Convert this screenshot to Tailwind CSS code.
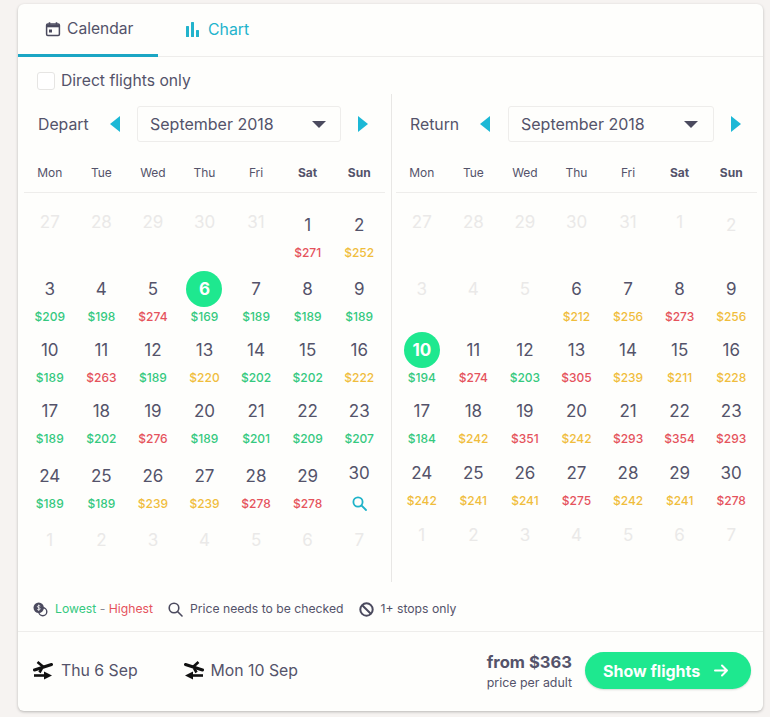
<!DOCTYPE html>
<html>
<head>
<meta charset="utf-8">
<script src="https://cdn.jsdelivr.net/npm/@tailwindcss/browser@4"></script>
</head>
<body class="bg-[#f6f3f1] font-['Inter','Liberation_Sans',sans-serif] text-[#54536a] antialiased">
<div class="w-[770px] h-[717px] overflow-hidden pt-[4px] pl-[18px]">
<div class="w-[745px] h-[707px] bg-[#fefefc] rounded-md shadow-[0_1px_3px_rgba(0,0,0,0.25)] flex flex-col">

  <div class="h-[53px] flex border-b border-[#eeedeb]">
    <div class="w-[140px] h-[53px] border-b-[3px] border-[#1ba6c4] flex items-center pl-[27px] gap-[6px] text-[15.6px]">
      <svg width="16" height="16" viewBox="0 0 16 16" fill="none"><rect x="1.6" y="3" width="12.8" height="11.4" rx="1.2" stroke="#4b4a5e" stroke-width="1.5"/><path d="M1.6 3.5h12.8v2.8H1.6z" fill="#4b4a5e"/><path d="M4.5 1.2v2.5M11.5 1.2v2.5" stroke="#4b4a5e" stroke-width="1.6"/><rect x="4" y="8.5" width="3" height="3" fill="#4b4a5e"/></svg>
      <span>Calendar</span>
    </div>
    <div class="flex items-center pl-[28px] gap-[9px] text-[15.8px] text-[#22b3cc] pb-[1px]">
      <svg width="13" height="15" viewBox="0 0 13 15" fill="#22b3cc"><rect x="0" y="4" width="3" height="11" rx="0.5"/><rect x="5" y="0" width="3" height="15" rx="0.5"/><rect x="10" y="8" width="3" height="7" rx="0.5"/></svg>
      <span>Chart</span>
    </div>
  </div>

  <div class="h-[37px] flex items-center pl-[19px] gap-[6px] text-[15.7px] pt-[10px]">
    <div class="w-[18px] h-[18px] rounded-[3px] border border-[#e6e5e3] bg-white"></div>
    <span>Direct flights only</span>
  </div>

  <div class="h-[488px] flex">
    <div class="w-[374px] border-r border-[#e8e7e5] pt-[12px] pl-[6px]">
      <div class="h-[36px] flex items-center">
        <span class="text-[15.8px] w-[86px] pl-[14px] pt-[1px]">Depart</span>
        <svg width="10" height="16" viewBox="0 0 10 16"><path d="M10 0v16L0 8z" fill="#1cb8d6"/></svg>
        <div class="ml-[17px] w-[204px] h-[36px] border border-[#eeedeb] rounded-[3px] flex items-center justify-between pl-[12px] pr-[14px] text-base">
          <span>September 2018</span>
          <svg width="14" height="7" viewBox="0 0 14 7"><path d="M0 0h14L7 7z" fill="#4b4a5e"/></svg>
        </div>
        <svg class="ml-[17px]" width="10" height="16" viewBox="0 0 10 16"><path d="M0 0v16l10-8z" fill="#1cb8d6"/></svg>
      </div>
      <div class="mt-[19px] w-[361px] h-[32px] pb-[8px] grid grid-cols-7 items-center text-center text-xs border-b border-[#eeedeb]">
        <div>Mon</div><div>Tue</div><div>Wed</div><div>Thu</div><div>Fri</div><div class="font-bold">Sat</div><div class="font-bold">Sun</div>
      </div>
      <div class="mt-[20px] w-[361px] grid grid-cols-7 grid-rows-[64px_61px_61px_65px_64px_24px] text-center text-[17px] leading-[24px] [&_span]:block [&_span]:mt-[8px] [&_span]:text-xs [&_span]:leading-4 [&_span]:font-medium">
        <div class="text-[#eae9e8] -mt-[3px]">27</div><div class="text-[#eae9e8] -mt-[3px]">28</div><div class="text-[#eae9e8] -mt-[3px]">29</div><div class="text-[#eae9e8] -mt-[3px]">30</div><div class="text-[#eae9e8] -mt-[3px]">31</div>
        <div>1<span class="text-[#e5535c]">$271</span></div><div>2<span class="text-[#f0bd3c]">$252</span></div>

        <div>3<span class="text-[#35c97f]">$209</span></div><div>4<span class="text-[#35c97f]">$198</span></div><div>5<span class="text-[#e5535c]">$274</span></div>
        <div><div class="mx-auto -my-[6px] w-9 h-9 rounded-full bg-[#1ee88f] text-white font-bold flex items-center justify-center">6</div><span class="text-[#35c97f]">$169</span></div>
        <div>7<span class="text-[#35c97f]">$189</span></div><div>8<span class="text-[#35c97f]">$189</span></div><div>9<span class="text-[#35c97f]">$189</span></div>

        <div>10<span class="text-[#35c97f]">$189</span></div><div>11<span class="text-[#e5535c]">$263</span></div><div>12<span class="text-[#35c97f]">$189</span></div><div>13<span class="text-[#f0bd3c]">$220</span></div><div>14<span class="text-[#35c97f]">$202</span></div><div>15<span class="text-[#35c97f]">$202</span></div><div>16<span class="text-[#f0bd3c]">$222</span></div>

        <div>17<span class="text-[#35c97f]">$189</span></div><div>18<span class="text-[#35c97f]">$202</span></div><div>19<span class="text-[#e5535c]">$276</span></div><div>20<span class="text-[#35c97f]">$189</span></div><div>21<span class="text-[#35c97f]">$201</span></div><div>22<span class="text-[#35c97f]">$209</span></div><div>23<span class="text-[#35c97f]">$207</span></div>

        <div>24<span class="text-[#35c97f]">$189</span></div><div>25<span class="text-[#35c97f]">$189</span></div><div>26<span class="text-[#f0bd3c]">$239</span></div><div>27<span class="text-[#f0bd3c]">$239</span></div><div>28<span class="text-[#e5535c]">$278</span></div><div>29<span class="text-[#e5535c]">$278</span></div>
        <div class="-mt-[3px]">30<svg class="mx-auto mt-[11px]" width="15" height="15" viewBox="0 0 15 15" fill="none" stroke="#1fb3c9" stroke-width="1.8"><circle cx="6" cy="6" r="4.6"/><path d="M9.5 9.5L14 14" stroke-linecap="round"/></svg></div>

        <div class="text-[#eae9e8]">1</div><div class="text-[#eae9e8]">2</div><div class="text-[#eae9e8]">3</div><div class="text-[#eae9e8]">4</div><div class="text-[#eae9e8]">5</div><div class="text-[#eae9e8]">6</div><div class="text-[#eae9e8]">7</div>
      </div>
    </div>

    <div class="w-[371px] pt-[12px] pl-[4px]">
      <div class="h-[36px] flex items-center">
        <span class="text-[15.8px] w-[84px] pl-[14px] pt-[1px]">Return</span>
        <svg width="10" height="16" viewBox="0 0 10 16"><path d="M10 0v16L0 8z" fill="#1cb8d6"/></svg>
        <div class="ml-[18px] w-[206px] h-[36px] border border-[#eeedeb] rounded-[3px] flex items-center justify-between pl-[12px] pr-[15px] text-base">
          <span>September 2018</span>
          <svg width="14" height="7" viewBox="0 0 14 7"><path d="M0 0h14L7 7z" fill="#4b4a5e"/></svg>
        </div>
        <svg class="ml-[17px]" width="10" height="16" viewBox="0 0 10 16"><path d="M0 0v16l10-8z" fill="#1cb8d6"/></svg>
      </div>
      <div class="mt-[19px] w-[361px] h-[32px] pb-[8px] grid grid-cols-7 items-center text-center text-xs border-b border-[#eeedeb]">
        <div>Mon</div><div>Tue</div><div>Wed</div><div>Thu</div><div>Fri</div><div class="font-bold">Sat</div><div class="font-bold">Sun</div>
      </div>
      <div class="mt-[20px] w-[361px] grid grid-cols-7 grid-rows-[64px_61px_61px_62px_62px_24px] text-center text-[17px] leading-[24px] [&_span]:block [&_span]:mt-[8px] [&_span]:text-xs [&_span]:leading-4 [&_span]:font-medium">
        <div class="text-[#eae9e8] -mt-[3px]">27</div><div class="text-[#eae9e8] -mt-[3px]">28</div><div class="text-[#eae9e8] -mt-[3px]">29</div><div class="text-[#eae9e8] -mt-[3px]">30</div><div class="text-[#eae9e8] -mt-[3px]">31</div><div class="text-[#eae9e8] -mt-[3px]">1</div><div class="text-[#eae9e8]">2</div>

        <div class="text-[#eae9e8]">3</div><div class="text-[#eae9e8]">4</div><div class="text-[#eae9e8]">5</div>
        <div>6<span class="text-[#f0bd3c]">$212</span></div><div>7<span class="text-[#f0bd3c]">$256</span></div><div>8<span class="text-[#e5535c]">$273</span></div><div>9<span class="text-[#f0bd3c]">$256</span></div>

        <div><div class="mx-auto -my-[6px] w-9 h-9 rounded-full bg-[#1ee88f] text-white font-bold flex items-center justify-center">10</div><span class="text-[#35c97f]">$194</span></div>
        <div>11<span class="text-[#e5535c]">$274</span></div><div>12<span class="text-[#35c97f]">$203</span></div><div>13<span class="text-[#e5535c]">$305</span></div><div>14<span class="text-[#f0bd3c]">$239</span></div><div>15<span class="text-[#f0bd3c]">$211</span></div><div>16<span class="text-[#f0bd3c]">$228</span></div>

        <div>17<span class="text-[#35c97f]">$184</span></div><div>18<span class="text-[#f0bd3c]">$242</span></div><div>19<span class="text-[#e5535c]">$351</span></div><div>20<span class="text-[#f0bd3c]">$242</span></div><div>21<span class="text-[#e5535c]">$293</span></div><div>22<span class="text-[#e5535c]">$354</span></div><div>23<span class="text-[#e5535c]">$293</span></div>

        <div>24<span class="text-[#f0bd3c]">$242</span></div><div>25<span class="text-[#f0bd3c]">$241</span></div><div>26<span class="text-[#f0bd3c]">$241</span></div><div>27<span class="text-[#e5535c]">$275</span></div><div>28<span class="text-[#f0bd3c]">$242</span></div><div>29<span class="text-[#f0bd3c]">$241</span></div><div>30<span class="text-[#e5535c]">$278</span></div>

        <div class="text-[#eae9e8]">1</div><div class="text-[#eae9e8]">2</div><div class="text-[#eae9e8]">3</div><div class="text-[#eae9e8]">4</div><div class="text-[#eae9e8]">5</div><div class="text-[#eae9e8]">6</div><div class="text-[#eae9e8]">7</div>
      </div>
    </div>
  </div>

  <div class="h-[50px] border-b border-[#eeedeb] pl-[15px] flex items-center text-[12.2px] pt-[5px]">
    <svg width="15" height="15" viewBox="0 0 15 15" fill="none"><circle cx="9.8" cy="9.8" r="4" stroke="#4b4a5e" stroke-width="1.4"/><circle cx="5.7" cy="5.7" r="5.2" fill="#4b4a5e"/><path d="M7.3 4.1c-.5-.6-2.900-.8-2.900.6 0 1.300 2.800.8 2.800 2.100 0 1.400-2.400 1.300-3 .6M5.700 2.600v6.200" stroke="#fefefc" stroke-width="0.8"/></svg>
    <span class="ml-[7px] text-[#35c97f]">Lowest</span><span class="text-[#8a8a95]">&nbsp;-&nbsp;</span><span class="text-[#e5535c]">Highest</span>
    <svg class="ml-[15px]" width="15" height="15" viewBox="0 0 15 15" fill="none" stroke="#4b4a5e" stroke-width="1.6"><circle cx="6" cy="6" r="4.8"/><path d="M9.500 9.500L14 14" stroke-linecap="round"/></svg>
    <span class="ml-[7px]">Price needs to be checked</span>
    <svg class="ml-[15px]" width="15" height="15" viewBox="0 0 15 15" fill="none" stroke="#4b4a5e" stroke-width="2"><circle cx="7.500" cy="7.500" r="6.200"/><path d="M3.200 3.200l8.600 8.600"/></svg>
    <span class="ml-[7px]">1+ stops only</span>
  </div>

  <div class="flex-1 flex items-center pl-[15px] pr-[12px] text-[15.8px] pb-[2px]">
    <svg width="20" height="20" viewBox="0 0 20 20" fill="none" stroke="#111"><path d="M1.500 9L18.500 3.500" stroke-width="3" stroke-linecap="round"/><path d="M4.500 1L10.500 6M9 7L6.500 11.500" stroke-width="2.600"/><path d="M1 14.500h11" stroke-width="2.600"/><path d="M11 10.500l8 4-8 4z" fill="#111" stroke="none"/></svg>
    <span class="ml-[8px] pt-[1px]">Thu 6 Sep</span>
    <svg class="ml-[46px]" width="20" height="20" viewBox="0 0 20 20" fill="none" stroke="#111"><path d="M1.500 3.500L18.500 9" stroke-width="3" stroke-linecap="round"/><path d="M14.500 1L9 6M10 7L12.500 11.500" stroke-width="2.600"/><path d="M19 14.500H8" stroke-width="2.600"/><path d="M9 10.500l-8 4 8 4z" fill="#111" stroke="none"/></svg>
    <span class="ml-[7px] pt-[1px]">Mon 10 Sep</span>
    <div class="ml-auto text-right">
      <div class="font-bold text-[16.6px] leading-6 -mt-[1px]">from $363</div>
      <div class="text-[12.4px] leading-4 mt-[1px]">price per adult</div>
    </div>
    <div class="ml-[13px] w-[166px] h-[37px] rounded-full bg-[#1ee88f] shadow-[0_1px_2px_rgba(0,0,0,0.15)] text-white font-bold text-base flex items-center pl-[18px] gap-[14px]">
      <span>Show flights</span>
      <svg width="15" height="13" viewBox="0 0 15 13" fill="none" stroke="#fff" stroke-width="2" stroke-linecap="round" stroke-linejoin="round"><path d="M1 6.500h12M8 1.500l5 5-5 5"/></svg>
    </div>
  </div>
</div>
</div>
</body>
</html>
